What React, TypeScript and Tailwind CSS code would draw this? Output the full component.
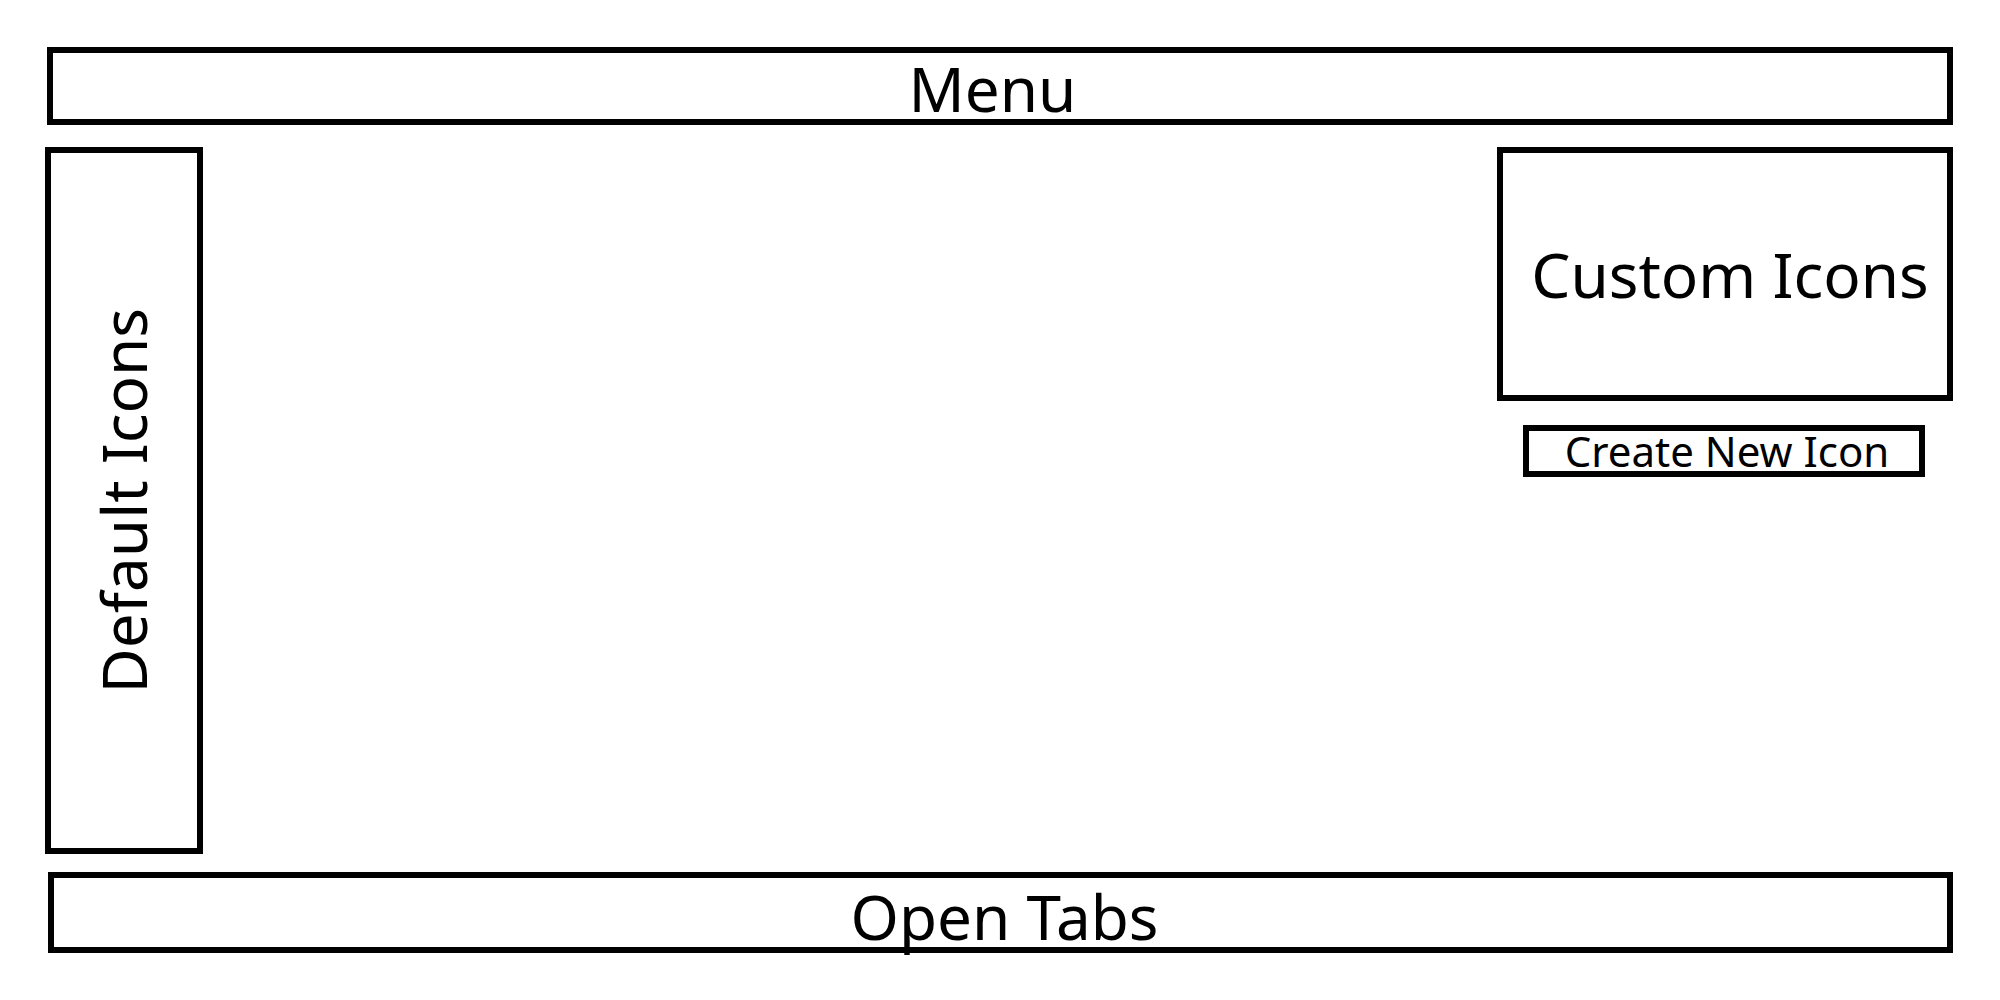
export default function App() {
  return (
    <div className="w-[2000px] h-[1000px] bg-white text-black font-['Noto_Sans',sans-serif] pt-[47px] flex flex-col">
      {/* Menu bar */}
      <div className="mx-[47px] h-[78px] border-[6px] border-black flex justify-center pt-[4px] pr-[15px]">
        <span className="text-[62px] leading-none">Menu</span>
      </div>

      {/* Middle area */}
      <div className="mt-[22px] flex justify-between">
        <div className="ml-[45px] w-[158px] h-[707px] border-[6px] border-black flex items-center justify-center pr-[2px]">
          <span className="text-[62px] leading-none whitespace-nowrap [writing-mode:vertical-rl] rotate-180">
            Default Icons
          </span>
        </div>

        <div className="mr-[47px] w-[456px] flex flex-col">
          <div className="h-[254px] border-[6px] border-black flex items-center justify-center pl-[10px]">
            <span className="text-[62px] leading-none whitespace-nowrap">Custom Icons</span>
          </div>
          <button className="mt-[24px] ml-[26px] w-[402px] h-[52px] border-[6px] border-black flex items-center justify-center pl-[6px]">
            <span className="text-[42px] leading-none whitespace-nowrap">Create New Icon</span>
          </button>
        </div>
      </div>

      {/* Open tabs bar */}
      <div className="mt-[18px] ml-[48px] mr-[47px] h-[81px] border-[6px] border-black flex justify-center pt-[7px] pl-[8px]">
        <span className="text-[62px] leading-none">Open Tabs</span>
      </div>
    </div>
  );
}
